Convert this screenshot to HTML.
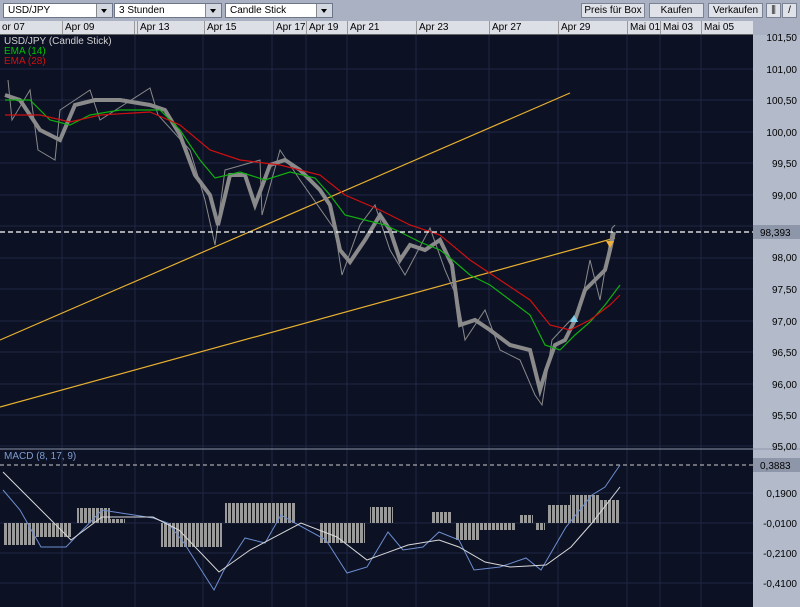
<!DOCTYPE html><html><head><meta charset="utf-8"><style>
body{margin:0;width:800px;height:607px;overflow:hidden;background:#a9b1c2;font-family:"Liberation Sans",sans-serif;font-size:10px;position:relative}
.sel{position:absolute;top:3px;height:15px;background:#fff;border:1px solid #6d7588;box-sizing:border-box;padding-left:4px;line-height:13px;color:#000}
.sel i{position:absolute;right:0;top:0;width:15px;height:13px;background:#d4d8e0;border-left:1px solid #888}
.sel i:after{content:"";position:absolute;left:4px;top:5px;border:3px solid transparent;border-top:4px solid #000}
.btn{position:absolute;top:3px;height:15px;background:#dfe2e8;border:1px solid #7b8294;box-sizing:border-box;text-align:center;line-height:13px;color:#000}
#axis{position:absolute;left:0;top:21px;width:753px;height:13px;background:#dcdfe6;border-bottom:1px solid #666}
#axis span{position:absolute;top:0;height:13px;line-height:13px;padding-left:2px;border-left:1px solid #999;color:#000}
</style></head><body>
<div class="sel" style="left:3px;width:110px">USD/JPY<i></i></div>
<div class="sel" style="left:114px;width:108px">3 Stunden<i></i></div>
<div class="sel" style="left:225px;width:108px">Candle Stick<i></i></div>
<div class="btn" style="left:581px;width:64px">Preis für Box</div>
<div class="btn" style="left:649px;width:55px">Kaufen</div>
<div class="btn" style="left:708px;width:55px">Verkaufen</div>
<div class="btn" style="left:766px;width:15px">⫼</div>
<div class="btn" style="left:782px;width:15px">/</div>
<div id="axis">
<span style="left:0;border:0">or 07</span><span style="left:62px">Apr 09</span><span style="left:134px;width:2px;padding:0"></span><span style="left:137px">Apr 13</span><span style="left:204px">Apr 15</span><span style="left:273px">Apr 17</span><span style="left:306px">Apr 19</span><span style="left:347px">Apr 21</span><span style="left:416px">Apr 23</span><span style="left:489px">Apr 27</span><span style="left:558px">Apr 29</span><span style="left:627px">Mai 01</span><span style="left:660px">Mai 03</span><span style="left:701px">Mai 05</span>
</div>
<svg style="position:absolute;left:0;top:0" width="800" height="607">
<defs><pattern id="st" width="4" height="10" patternUnits="userSpaceOnUse"><rect width="3" height="10" fill="#9a9a9a"/></pattern></defs>
<rect x="0" y="35" width="753" height="572" fill="#0c1124"/>
<rect x="753" y="35" width="47" height="572" fill="#b3bbcb"/>
<g stroke="#1f2845" stroke-width="1">
<path d="M62 35V607M135 35V607M203 35V607M272 35V607M306 35V607M347 35V607M416 35V607M489 35V607M558 35V607M627 35V607M660 35V607M701 35V607"/>
<path d="M0 69H753M0 100H753M0 132H753M0 163H753M0 195H753M0 226H753M0 258H753M0 289H753M0 321H753M0 352H753M0 384H753M0 415H753M0 446H753M0 493H753M0 523H753M0 553H753M0 583H753"/>
</g>
<line x1="0" y1="449" x2="800" y2="449" stroke="#8d95a8"/>
<g font-size="10" fill="#000" text-anchor="end">
<text x="797" y="41">101,50</text><text x="797" y="73">101,00</text><text x="797" y="104">100,50</text><text x="797" y="136">100,00</text><text x="797" y="167">99,50</text><text x="797" y="199">99,00</text><text x="797" y="261">98,00</text><text x="797" y="293">97,50</text><text x="797" y="325">97,00</text><text x="797" y="356">96,50</text><text x="797" y="388">96,00</text><text x="797" y="419">95,50</text><text x="797" y="450">95,00</text>
<text x="797" y="497">0,1900</text><text x="797" y="527">-0,0100</text><text x="797" y="557">-0,2100</text><text x="797" y="587">-0,4100</text>
</g>
<rect x="753" y="225" width="47" height="14" fill="#8e97aa"/><text x="760" y="236" font-size="10">98,393</text>
<rect x="753" y="458" width="47" height="14" fill="#8e97aa"/><text x="760" y="469" font-size="10">0,3883</text>
<text x="4" y="44" fill="#d0d0d0">USD/JPY (Candle Stick)</text>
<text x="4" y="54" fill="#00c000">EMA (14)</text>
<text x="4" y="64" fill="#d01010">EMA (28)</text>
<text x="4" y="459" fill="#7f9cd0">MACD (8, 17, 9)</text>
<line x1="0" y1="340" x2="570" y2="93" stroke="#e8b030" stroke-width="1.2"/>
<line x1="0" y1="407" x2="615" y2="238" stroke="#e8b030" stroke-width="1.2"/>
<polyline fill="none" stroke="#8a8a8a" stroke-width="4" points="5,95 20,100 40,130 60,140 75,105 95,100 120,100 150,105 165,110 180,135 195,175 210,195 218,225 230,175 245,175 255,205 270,165 285,160 300,170 320,190 330,205 340,250 350,262 365,240 380,215 390,230 400,260 410,245 425,250 440,240 452,265 460,325 475,320 490,330 510,345 530,350 540,390 546,370 555,345 565,340 575,320 585,290 595,280 605,270 610,250 614,232"/>
<polyline fill="none" stroke="#8a8a8a" stroke-width="1" points="8,80 12,120 30,90 38,150 55,160 60,110 90,90 100,120 150,88 158,115 190,150 205,200 215,245 225,170 260,160 262,215 280,150 300,180 335,230 342,275 360,225 375,205 390,250 405,275 430,228 445,270 458,300 465,340 485,310 500,350 520,360 535,395 542,405 552,340 580,310 590,260 600,300 612,228 615,225"/>
<polyline fill="none" stroke="#10b010" stroke-width="1.2" points="5,100 30,100 50,120 70,125 90,115 120,110 160,110 180,130 200,160 215,178 240,172 265,180 290,172 315,178 330,195 345,215 365,220 385,225 400,232 420,242 440,250 455,262 470,275 490,285 510,300 530,315 545,345 560,350 575,335 590,322 605,305 620,285"/>
<polyline fill="none" stroke="#d01010" stroke-width="1.2" points="5,115 40,115 70,122 100,115 150,112 180,125 210,150 240,160 280,165 320,175 345,195 380,210 410,225 440,235 470,260 500,280 530,300 550,325 570,330 590,320 610,305 620,295"/>
<line x1="0" y1="232" x2="753" y2="232" stroke="#fff" stroke-dasharray="5,3" stroke-width="1.2"/>
<polygon points="606,241 614,241 610,248" fill="#f0b040"/>
<polygon points="570,322 578,322 574,315" fill="#80d0f0"/>
<line x1="0" y1="465" x2="753" y2="465" stroke="#ccc" stroke-dasharray="4,3"/>
<polygon fill="url(#st)" points="3,523 3,545 36,545 36,537 72,537 72,523 77,523 77,508 110,508 110,519 125,519 125,523 161,523 161,547 222,547 222,523 225,523 225,503 296,503 296,523 319,523 319,543 365,543 365,523 370,523 370,507 393,507 393,523 431,523 431,512 451,512 451,523 456,523 456,540 480,540 480,530 515,530 515,523 520,523 520,515 533,515 533,523 535,523 535,530 545,530 545,523 548,523 548,505 570,505 570,495 600,495 600,500 620,500 620,523"/>
<polyline fill="none" stroke="#6d8ed0" stroke-width="1" points="3,490 20,510 41,547 66,547 102,510 153,518 168,523 184,543 214,590 224,570 245,538 265,543 281,515 293,522 326,540 347,573 367,567 388,532 403,550 423,547 439,532 459,540 474,570 500,567 526,558 541,570 566,527 592,495 605,487 620,465"/>
<polyline fill="none" stroke="#d8d8d8" stroke-width="1" points="3,472 31,500 71,540 102,517 153,517 179,530 219,572 250,550 301,523 337,537 367,560 408,545 439,540 459,547 485,562 510,567 546,565 571,547 592,523 620,487"/>
</svg>
</body></html>
